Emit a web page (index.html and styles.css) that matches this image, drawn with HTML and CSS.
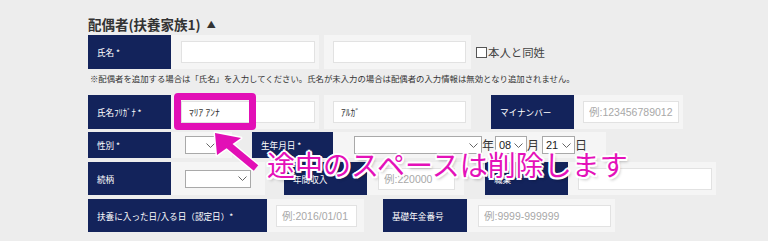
FILE: index.html
```html
<!DOCTYPE html>
<html lang="ja">
<head>
    <title>配偶者(扶養家族1)</title>
    <meta charset="UTF-8">
    <meta name="viewport" content="width=device-width, initial-scale=1.0">
    <link rel="stylesheet" href="styles.css">
</head>
<body>
    <div class="form">
        <h3 class="sec-title">配偶者(扶養家族1) <span class="tri">▲</span></h3>

        <!-- 氏名 -->
        <div class="row r1">
            <div class="lbl">氏名 *</div>
            <div class="cell c148"><input class="txt w134" type="text"></div>
            <div class="cell c147 gap5"><input class="txt w133" type="text"></div>
            <label class="check"><span class="box"></span>本人と同姓</label>
        </div>
        <p class="note">※配偶者を追加する場合は「氏名」を入力してください。氏名が未入力の場合は配偶者の入力情報は無効となり追加されません。</p>

        <!-- フリガナ / マイナンバー -->
        <div class="row r2">
            <div class="lbl">氏名ﾌﾘｶﾞﾅ *</div>
            <div class="cell c148"><input class="txt w134 val" type="text" value="ﾏﾘｱ ｱﾝﾅ"></div>
            <div class="cell c147 gap5"><input class="txt w133 val" type="text" value="ｱﾙｶﾞ"></div>
            <div class="lbl gap20">マイナンバー</div>
            <div class="cell c109"><input class="txt w96" type="text" placeholder="例:123456789012"></div>
        </div>

        <!-- 性別 / 生年月日 -->
        <div class="row r3">
            <div class="lbl">性別 *</div>
            <div class="cell c61"><div class="sel w34"><span></span><svg width="9" height="5" viewBox="0 0 9 5"><path d="M0.5 0.5 L4.5 4.5 L8.5 0.5" /></svg></div></div>
            <div class="lbl lbl81 gap20">生年月日 *</div>
            <div class="cell c273">
                <div class="sel w128"><span></span><svg width="9" height="5" viewBox="0 0 9 5"><path d="M0.5 0.5 L4.5 4.5 L8.5 0.5" /></svg></div>
                <span class="unit">年</span>
                <div class="sel w32"><span>08</span><svg width="9" height="5" viewBox="0 0 9 5"><path d="M0.5 0.5 L4.5 4.5 L8.5 0.5" /></svg></div>
                <span class="unit">月</span>
                <div class="sel w33 ml2"><span>21</span><svg width="9" height="5" viewBox="0 0 9 5"><path d="M0.5 0.5 L4.5 4.5 L8.5 0.5" /></svg></div>
                <span class="unit">日</span>
            </div>
        </div>

        <!-- 続柄 / 年間収入 -->
        <div class="row r4">
            <div class="lbl">続柄</div>
            <div class="cell c94"><div class="sel w66"><span></span><svg width="9" height="5" viewBox="0 0 9 5"><path d="M0.5 0.5 L4.5 4.5 L8.5 0.5" /></svg></div></div>
            <div class="lbl gap19">年間収入</div>
            <div class="cell c97 pl11"><input class="txt w77" type="text" placeholder="例:220000"></div>
            <div class="lbl gap21">職業</div>
            <div class="cell c148"><input class="txt w134" type="text"></div>
        </div>

        <!-- 扶養に入った日 / 基礎年金番号 -->
        <div class="row r5">
            <div class="lbl lbl179">扶養に入った日/入る日（認定日）*</div>
            <div class="cell c97 pl9"><input class="txt w81" type="text" placeholder="例:2016/01/01"></div>
            <div class="lbl lbl84 gap19">基礎年金番号</div>
            <div class="cell c148 pl11"><input class="txt w133" type="text" placeholder="例:9999-999999"></div>
        </div>
    </div>

    <!-- 注釈 -->
    <div class="mark"></div>
    <svg class="arrow" width="70" height="55" viewBox="0 0 70 55">
        <g class="arrow-out">
            <line x1="27" y1="19" x2="56" y2="43" />
            <polygon points="15,8 17,30 41,13" />
        </g>
        <g class="arrow-in">
            <line x1="27" y1="19" x2="56" y2="43" />
            <polygon points="15,8 17,30 41,13" />
        </g>
    </svg>
    <div class="caption">途中のスペースは削除します</div>
</body>
</html>
```

FILE: styles.css
```css
/* 扶養家族フォーム */
body {
    margin: 0;
    font-family: "Noto Sans CJK JP", "Noto Sans", sans-serif;
    background-color: #ededed;
    color: #333;
    position: relative;
    height: 241px;
    overflow: hidden;
}

.form {
    padding-left: 88px;
}

.sec-title {
    margin: 0;
    padding-top: 14px;
    height: 21px;
    line-height: 21px;
    font-size: 13.5px;
    font-weight: bold;
    color: #333;
}

.tri {
    font-size: 9px;
    margin-left: 3px;
    vertical-align: 2px;
}

.row {
    display: flex;
    align-items: stretch;
}

.r1 { height: 34px; }
.r2 { height: 34px; }
.r3 { height: 26px; margin-top: 3px; }
.r4 { height: 33px; margin-top: 4px; }
.r5 { height: 33px; margin-top: 4px; }

.lbl {
    background-color: #13235b;
    color: #fff;
    width: 83px;
    box-sizing: border-box;
    padding-left: 9px;
    display: flex;
    align-items: center;
    font-size: 8.6px;
    white-space: nowrap;
}

.lbl81 { width: 81px; }
.lbl84 { width: 84px; }
.lbl179 { width: 179px; }

.cell {
    background-color: #f5f5f5;
    box-sizing: border-box;
    padding-left: 10px;
    display: flex;
    align-items: center;
}

.c148 { width: 148px; }
.c147 { width: 147px; padding-left: 9px; }
.c109 { width: 109px; padding-left: 9px; }
.c61 { width: 61px; padding-left: 14px; }
.c94 { width: 94px; padding-left: 14px; }
.c97 { width: 97px; }
.c273 { width: 273px; padding-left: 21px; }
.pl9 { padding-left: 9px; }
.pl11 { padding-left: 11px; }

.gap5 { margin-left: 5px; }
.gap19 { margin-left: 19px; }
.gap20 { margin-left: 20px; }
.gap21 { margin-left: 21px; }

.txt {
    height: 22px;
    box-sizing: border-box;
    border: 1px solid #e2e2e2;
    background: #fff;
    padding: 0 5px;
    margin: 0;
    font-family: "Liberation Sans", "Noto Sans CJK JP", sans-serif;
    font-size: 10.5px;
    color: #333;
    outline: none;
}

.txt::placeholder {
    color: #a8a8a8;
}

.val {
    font-family: "Noto Sans CJK JP", sans-serif;
    font-size: 9.5px;
    padding-left: 7px;
}

.w134 { width: 134px; }
.w133 { width: 133px; }
.w96 { width: 96px; }
.w77 { width: 77px; }
.w81 { width: 81px; }

.sel {
    height: 18px;
    box-sizing: border-box;
    border: 1px solid #a9a9a9;
    background: #fff;
    display: flex;
    align-items: center;
    justify-content: space-between;
    padding: 0 3px 0 3px;
    font-family: "Liberation Sans", sans-serif;
    font-size: 11px;
    color: #222;
}

.sel svg path {
    fill: none;
    stroke: #666;
    stroke-width: 1;
}

.w34 { width: 34px; }
.w128 { width: 128px; }
.w32 { width: 32px; }
.w33 { width: 33px; }
.w66 { width: 66px; }
.ml2 { margin-left: 2px; }

.unit {
    font-size: 12px;
    width: 13px;
    color: #333;
    line-height: 18px;
}

.check {
    display: flex;
    align-items: center;
    margin-left: 5px;
    font-size: 11.4px;
    color: #444;
}

.box {
    width: 9px;
    height: 9px;
    border: 1px solid #555;
    background: #fff;
    margin-right: 1px;
}

.note {
    margin: 0;
    height: 26px;
    line-height: 18px;
    padding-left: 2px;
    font-size: 8.4px;
    color: #333;
    white-space: nowrap;
}

/* 注釈の赤枠・矢印・文字 */
.mark {
    position: absolute;
    left: 174px;
    top: 93px;
    width: 82px;
    height: 37px;
    box-sizing: border-box;
    border: 7px solid #e20fb6;
    border-radius: 4px;
}

.arrow {
    position: absolute;
    left: 200px;
    top: 125px;
}

.arrow-out line {
    stroke: #fff;
    stroke-width: 10;
}

.arrow-out polygon {
    fill: #fff;
    stroke: #fff;
    stroke-width: 3;
    stroke-linejoin: round;
}

.arrow-in line {
    stroke: #e20fb6;
    stroke-width: 7;
}

.arrow-in polygon {
    fill: #e20fb6;
}

.caption {
    position: absolute;
    left: 267px;
    top: 149px;
    font-size: 28px;
    line-height: 30px;
    color: #e411b9;
    white-space: nowrap;
    text-shadow:
        2px 0 0 #fff, -2px 0 0 #fff, 0 2px 0 #fff, 0 -2px 0 #fff,
        1.5px 1.5px 0 #fff, -1.5px 1.5px 0 #fff, 1.5px -1.5px 0 #fff, -1.5px -1.5px 0 #fff,
        2px 3px 3px rgba(0, 0, 0, 0.25);
}
```
